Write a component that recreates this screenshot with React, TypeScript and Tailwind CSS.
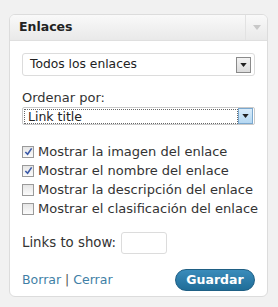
import React from 'react';

function Arrow({ className }: { className?: string }) {
    return (
        <svg viewBox="0 0 8 5" className={className}>
            <path d="M0 0h8L4 5z" fill="currentColor" />
        </svg>
    );
}

function Check({ checked, label }: { checked: boolean; label: string }) {
    return (
        <label className="flex items-center h-[19px]">
            <span className="w-[12px] h-[12px] shrink-0 border border-[#9a9a9a] bg-gradient-to-b from-[#e6e6e6] to-[#fbfbfb] flex items-center justify-center">
                {checked && (
                    <svg viewBox="0 0 10 10" className="w-[9px] h-[9px]">
                        <path d="M1.5 5.5l2.5 2.5 4.5-6.5" fill="none" stroke="#3b5aa8" strokeWidth="1.8" />
                    </svg>
                )}
            </span>
            <span className="ml-[4px] text-[13px] text-[#333] whitespace-nowrap">{label}</span>
        </label>
    );
}

export default function App() {
    return (
        <div className="w-[278px] h-[307px] bg-[#f1f1f1] pt-[14px] pl-[9px] font-['DejaVu_Sans',sans-serif]">
            <div className="w-[259px] h-[283px] border border-[#dcdcdc] rounded-[6px] bg-white overflow-hidden">
                {/* header */}
                <div className="h-[26px] flex bg-gradient-to-b from-[#f9f9f9] to-[#e9e9e9] border-b border-[#dfdfdf]">
                    <div className="flex-1 pl-[9px] flex items-center text-[12.5px] font-bold text-[#222]">Enlaces</div>
                    <div className="w-[22px] border-l border-[#e2e2e2] flex items-center justify-center">
                        <Arrow className="w-[8px] h-[5px] text-[#c8c8c8]" />
                    </div>
                </div>

                <div className="px-[12px] pt-[12px]">
                    <div className="h-[23px] border border-[#dcdcdc] rounded-[3px] flex items-center pl-[7px] pr-[3px]">
                        <span className="flex-1 text-[12.3px] text-[#222]">Todos los enlaces</span>
                        <span className="w-[15px] h-[16px] border border-[#8a8a8a] bg-gradient-to-b from-[#f3f3f3] to-[#dcdcdc] flex items-center justify-center">
                            <Arrow className="w-[7px] h-[4px] text-[#222]" />
                        </span>
                    </div>

                    <div className="mt-[13px] text-[13px] text-[#333] leading-[18px]">Ordenar por:</div>
                    <div className="h-[18px] border border-[#c9c9c9] rounded-[2px] flex items-center pl-[1px] pr-[1px]">
                        <span className="flex-1 h-[15px] border border-dotted border-[#666] text-[12.5px] text-[#222] leading-[13px] pl-[3px]">Link title</span>
                        <span className="w-[15px] h-[16px] border border-[#7aa8cf] bg-gradient-to-b from-[#d9ecfa] to-[#b5d8f2] flex items-center justify-center">
                            <Arrow className="w-[7px] h-[4px] text-[#222]" />
                        </span>
                    </div>

                    <div className="mt-[17px] flex flex-col">
                        <Check checked label="Mostrar la imagen del enlace" />
                        <Check checked label="Mostrar el nombre del enlace" />
                        <Check checked={false} label="Mostrar la descripción del enlace" />
                        <Check checked={false} label="Mostrar el clasificación del enlace" />
                    </div>

                    <div className="mt-[14px] flex items-center">
                        <span className="text-[13.3px] text-[#333]">Links to show:</span>
                        <span className="ml-[5px] w-[46px] h-[22px] border border-[#dcdcdc] rounded-[3px]" />
                    </div>

                    <div className="mt-[15px] flex items-center justify-between">
                        <span className="text-[12.5px] text-[#3f7fa6]">
                            Borrar <span className="text-[#555]">|</span> Cerrar
                        </span>
                        <button className="w-[80px] h-[22px] rounded-full border border-[#1f5f84] bg-gradient-to-b from-[#3a8cbb] to-[#1f6d98] text-white text-[12.5px] font-bold">
                            Guardar
                        </button>
                    </div>
                </div>
            </div>
        </div>
    );
}
